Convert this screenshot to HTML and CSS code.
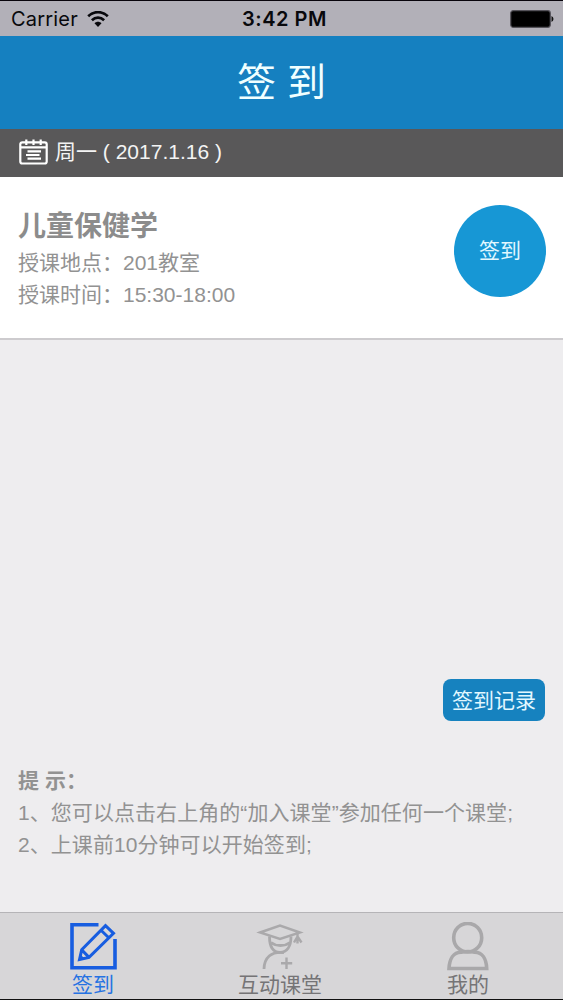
FILE: index.html
```
<!DOCTYPE html>
<html lang="zh-CN">
<head>
    <meta charset="UTF-8">
    <meta name="viewport" content="width=device-width, initial-scale=1.0">
    <title>签到</title>
    <link rel="stylesheet" href="styles.css">
</head>
<body>
    <div class="status-bar">
        <div class="carrier">
            <span>Carrier</span>
            <svg width="22" height="17" viewBox="0 0 22 17">
                <path d="M1.2 5.2C6.8-.2 15.2-.2 20.8 5.2" fill="none" stroke="#08080c" stroke-width="2.7"/>
                <path d="M4.9 9.2C8.5 5.7 13.500 5.7 17.1 9.2" fill="none" stroke="#08080c" stroke-width="2.7"/>
                <path d="M7.5 12.2C9.500 10.200 12.500 10.200 14.500 12.200L11 16Z" fill="#08080c"/>
            </svg>
        </div>
        <div class="clock">3:42 PM</div>
        <svg class="battery" width="44" height="18" viewBox="0 0 44 18">
            <rect x=".7" y=".7" width="39.6" height="16.6" rx="2.5" fill="#000" stroke="#55535a" stroke-width="1.2"/>
            <path d="M41.5 6Q43.5 7 43.5 9T41.5 12Z" fill="#111"/>
        </svg>
    </div>

    <div class="header">
        <h1>签 到</h1>
    </div>

    <div class="date-bar">
        <svg width="29" height="26" viewBox="0 0 29 26" fill="none" stroke="#fff" stroke-width="2.2">
            <rect x="1.3" y="3.3" width="26.4" height="21.2" rx="2"/>
            <path d="M1.3 8.3H27.7M7.3 .5V6M14.5 .5V6M21.7 .5V6M8.5 12.3H22M7 16H20.5M8.5 19.7H22"/>
        </svg>
        <span>周一 ( 2017.1.16 )</span>
    </div>

    <div class="course">
        <div class="course-info">
            <h2>儿童保健学</h2>
            <p>授课地点：201教室</p>
            <p>授课时间：15:30-18:00</p>
        </div>
        <button class="sign-btn">签到</button>
    </div>

    <div class="content">
        <button class="record-btn">签到记录</button>
        <div class="tips">
            <h3>提 示：</h3>
            <p>1、您可以点击右上角的“加入课堂”参加任何一个课堂;</p>
            <p>2、上课前10分钟可以开始签到;</p>
        </div>
    </div>

    <div class="tab-bar">
        <div class="tab active">
            <svg width="48" height="50" viewBox="0 0 48 50" fill="none" stroke="#175de0" stroke-width="3.6">
                <path d="M29.5 2.7H3V45.7H46V17"/>
                <path d="M10.500 37.500L12.700 27.800L36.500 3.700L44.500 11.300L20 35.400ZM12.700 27.800L20 35.400M32 8.200L40 16" stroke-width="3"/>
                <path d="M9.500 38.500L11.500 32.500L15.800 36.700Z" fill="#175de0" stroke="none"/>
            </svg>
            <span>签到</span>
        </div>
        <div class="tab">
            <svg width="48" height="50" viewBox="0 0 48 50" fill="none" stroke="#aaa9ab" stroke-width="2.4">
                <path d="M4 10.5L24 3.5L44 10.5L24 17Z"/>
                <path d="M13.500 14.500C13.500 24.500 17 30.300 24 30.300S35 24.500 35 14.500" stroke-width="2.8"/>
                <path d="M15 20.500C20 24.500 29 24.500 34 20.500M28 30.500C15 29 8.200 36 8 47" stroke-width="2.8"/>
                <path d="M41.500 12V21.500M41.500 14.500L38 20.500M41.500 14.500L45.500 20.500M30.500 35.500V47M25 41.300H36.200"/>
            </svg>
            <span>互动课堂</span>
        </div>
        <div class="tab">
            <svg width="48" height="50" viewBox="0 0 48 50" fill="none" stroke="#a9a8aa" stroke-width="3.6">
                <ellipse cx="23.700" cy="15.700" rx="14" ry="14.300"/>
                <path d="M17 30.300C9.500 30.300 5.500 37 5 46.500H42.700C42.300 37 38.300 30.300 30.800 30.300C27.500 29.300 20.500 29.300 17 30.300Z"/>
            </svg>
            <span>我的</span>
        </div>
    </div>
</body>
</html>
```

FILE: styles.css
```
* {
    margin: 0;
    padding: 0;
    box-sizing: border-box;
}

body {
    display: flex;
    flex-direction: column;
    height: 1000px;
    border-top: 1px solid #08040c;
    border-bottom: 1px solid #111;
    background: #eeedef;
    color: #929292;
    font-family: "Liberation Sans", "Noto Sans CJK SC", sans-serif;
    font-size: 21px;
    line-height: 32px;
    overflow: hidden;
}

button {
    border: none;
    color: #e2f8ff;
    font-family: inherit;
    font-size: 21px;
}

.status-bar {
    display: grid;
    grid-template-columns: 1fr auto 1fr;
    align-items: center;
    height: 35px;
    padding: 1px 9px 0 11px;
    background: #b2b0b8;
    color: #08080c;
    font-family: Inter, sans-serif;
    font-size: 20px;
}

.carrier {
    display: flex;
    align-items: center;
    gap: 9px;
    letter-spacing: 0.2px;
}

.clock {
    padding-left: 4px;
    font-weight: 600;
    letter-spacing: 0.5px;
}

.battery {
    justify-self: end;
}

.header {
    display: flex;
    align-items: center;
    justify-content: center;
    height: 93px;
    background: #1580c0;
}

.header h1 {
    color: #f0ffff;
    font-size: 39px;
    font-weight: 400;
}

.date-bar {
    display: flex;
    align-items: center;
    gap: 7px;
    height: 48px;
    padding: 0 19px 2px;
    background: #595859;
    color: #f4f4f4;
}

.course {
    display: flex;
    align-items: flex-start;
    justify-content: space-between;
    height: 163px;
    padding: 28px 17px 0 18px;
    border-bottom: 2px solid #cdcbce;
    background: #fff;
}

.course h2 {
    height: 42px;
    color: #8c8c8c;
    font-size: 28px;
    font-weight: bold;
    line-height: 43px;
}

.sign-btn {
    width: 92px;
    height: 92px;
    padding-bottom: 4px;
    border-radius: 50%;
    background: #1797d5;
}

.content {
    flex: 1;
    display: flex;
    flex-direction: column;
    justify-content: flex-end;
    padding: 0 18px 51px;
}

.record-btn {
    align-self: flex-end;
    width: 102px;
    height: 42px;
    margin-bottom: 44px;
    padding-bottom: 3px;
    border-radius: 8px;
    background: #1682bf;
}

.tips {
    letter-spacing: 0.06px;
}

.tips h3 {
    font-size: 21px;
    font-weight: bold;
}

.tab-bar {
    display: flex;
    height: 87px;
    border-top: 1px solid #b5b4b7;
    background: #d7d6d8;
}

.tab {
    flex: 1;
    display: flex;
    flex-direction: column;
    align-items: center;
    padding: 9px 2px 0 0;
    color: #757476;
    line-height: 26px;
}

.tab.active {
    padding-right: 1px;
    color: #2672e2;
}
```
